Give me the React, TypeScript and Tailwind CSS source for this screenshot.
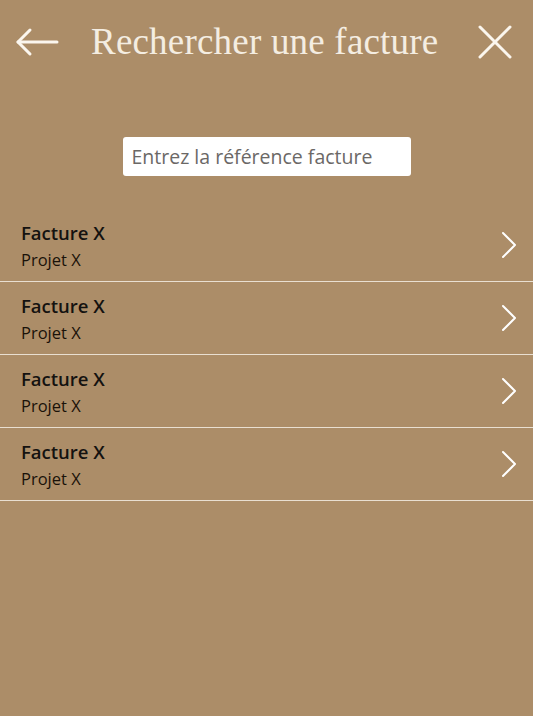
const invoices = [
  { title: "Facture X", project: "Projet X" },
  { title: "Facture X", project: "Projet X" },
  { title: "Facture X", project: "Projet X" },
  { title: "Facture X", project: "Projet X" },
]

function InvoiceRow({ title, project }: { title: string; project: string }) {
  return (
    <li className="flex h-[73px] items-center justify-between border-b border-[#e9dfd1] pl-[21px] pr-[16px]">
      <div className="flex flex-col">
        <span className="text-[18.5px] font-semibold leading-[24px] text-[#141210]">{title}</span>
        <span className="mt-[5px] text-[16.5px] leading-[20px] text-[#1a1209]">{project}</span>
      </div>
      <svg width="16" height="28" viewBox="0 0 16 28" fill="none" stroke="#ffffff" strokeWidth="2" strokeLinecap="round" strokeLinejoin="round" aria-hidden="true">
        <path d="M2 2l12 12L2 26" />
      </svg>
    </li>
  )
}

export default function App() {
  return (
    <div className="min-h-[716px] w-full bg-[#ac8d68] font-['Open_Sans',sans-serif]">
      {/* Header */}
      <header className="flex h-[86px] items-center pl-[15px] pr-[21px] pb-[2px]">
        <svg width="44" height="30" viewBox="0 0 44 30" fill="none" stroke="#fbf6ee" strokeWidth="3" strokeLinecap="round" strokeLinejoin="round" aria-hidden="true">
          <path d="M42 15H3" />
          <path d="M15 3L3 15l12 12" />
        </svg>
        <h1 className="ml-[32px] font-['Liberation_Serif',serif] text-[37px] font-normal tracking-[0.2px] text-[#f4ede2]">
          Rechercher une facture
        </h1>
        <svg className="ml-auto" width="34" height="34" viewBox="0 0 34 34" fill="none" stroke="#fbf6ee" strokeWidth="3" strokeLinecap="round" aria-hidden="true">
          <path d="M2 2l30 30M32 2L2 32" />
        </svg>
      </header>

      {/* Search */}
      <div className="flex justify-center pt-[51px]">
        <input
          type="text"
          placeholder="Entrez la référence facture"
          className="h-[39px] w-[288px] rounded-[3px] bg-white px-[9px] text-[19.5px] text-[#333] placeholder:text-[#6b6866] outline-none"
        />
      </div>

      {/* Results */}
      <ul className="mt-[33px]">
        {invoices.map((inv, i) => (
          <InvoiceRow key={i} title={inv.title} project={inv.project} />
        ))}
      </ul>
    </div>
  )
}
